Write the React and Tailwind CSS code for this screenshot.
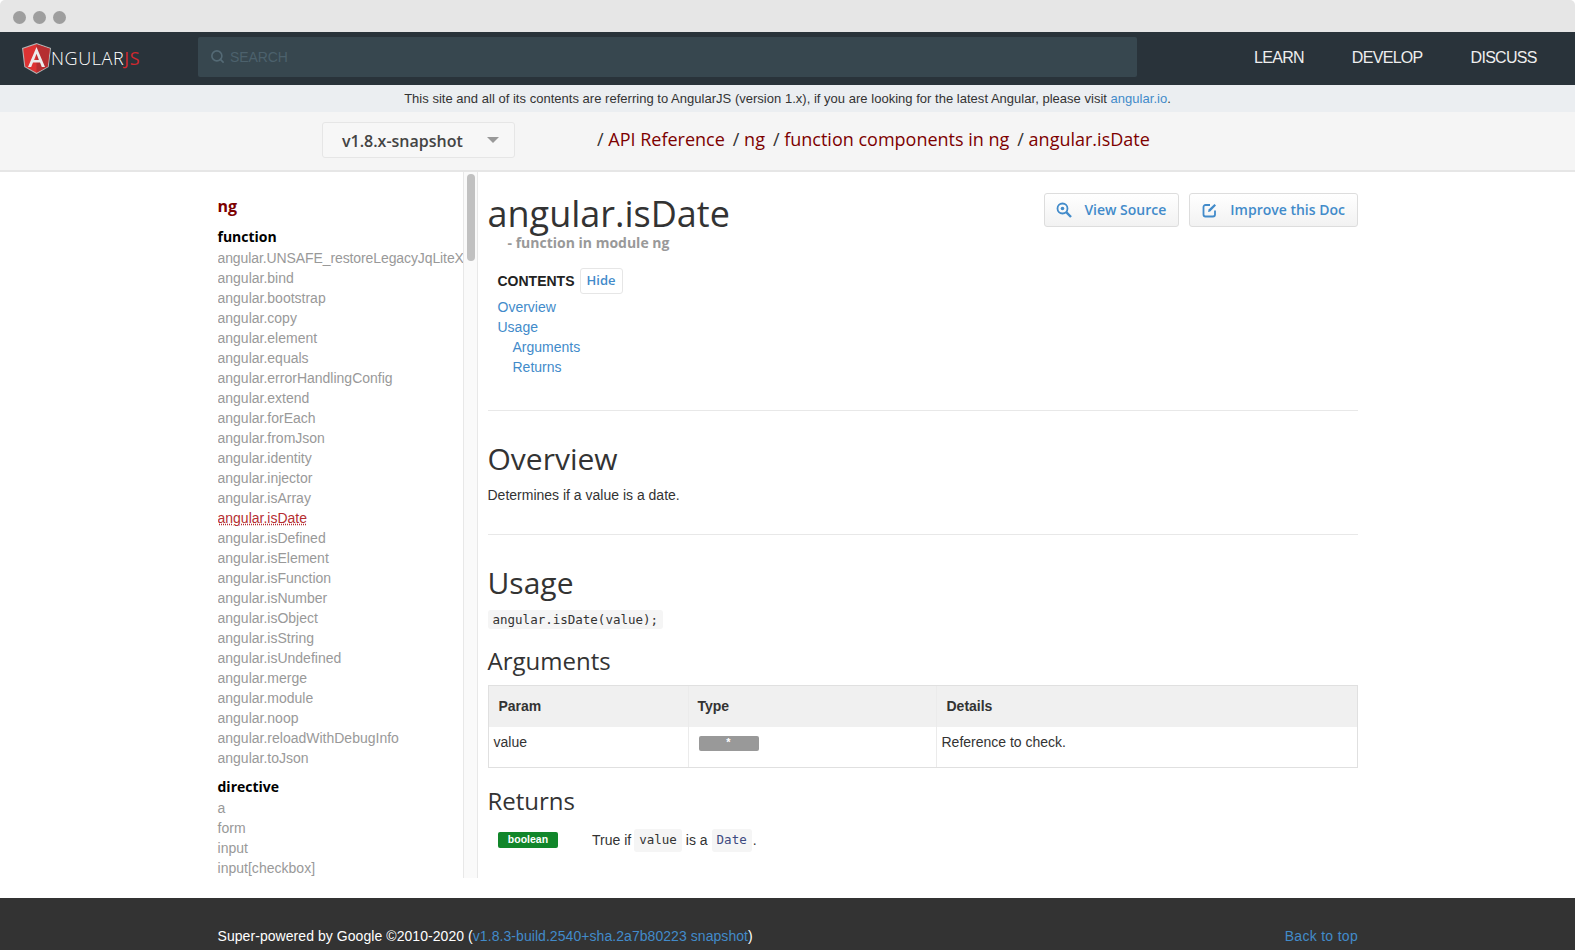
import React from "react";
import { Search } from "lucide-react";

const sans = "font-['Liberation_Sans',Arial,sans-serif]";
const open = "font-['Open_Sans',sans-serif]";
const mono = "font-['DejaVu_Sans_Mono',monospace]";

const fns = ["angular.UNSAFE_restoreLegacyJqLiteXHR","angular.bind","angular.bootstrap","angular.copy","angular.element","angular.equals","angular.errorHandlingConfig","angular.extend","angular.forEach","angular.fromJson","angular.identity","angular.injector","angular.isArray","angular.isDate","angular.isDefined","angular.isElement","angular.isFunction","angular.isNumber","angular.isObject","angular.isString","angular.isUndefined","angular.merge","angular.module","angular.noop","angular.reloadWithDebugInfo","angular.toJson"];
const dirs = ["a","form","input","input[checkbox]"];

function Logo() {
  return (
    <div className="flex items-center w-[198px] pl-[22px] shrink-0">
      <svg width="29" height="31" viewBox="0 0 29 31" className="shrink-0">
        <path d="M14.5 0 L0 5 L2.3 24 L14.5 31 L26.7 24 L29 5 Z" fill="#b3b3b3" />
        <path d="M14.5 1.2 L1.2 5.8 L3.3 23.4 L14.5 29.8 L25.7 23.4 L27.8 5.8 Z" fill="#dd3333" />
        <path d="M14.5 1.2 L27.8 5.8 L25.7 23.4 L14.5 29.8 Z" fill="#b52e31" />
        <path d="M14.5 4 L6 24 L9.2 24 L11 19.5 L18 19.5 L19.8 24 L23 24 Z M12.1 17 L14.5 10.8 L16.9 17 Z" fill="#ececec" fillRule="evenodd" />
      </svg>
      <span className={`${open} font-light text-[18px] leading-none text-white tracking-[0.6px] -mt-[1px]`}>NGULAR<span className="text-[#d0282e] font-normal">JS</span></span>
    </div>
  );
}

function Btn({ children }) {
  return (
    <a className={`h-[34px] flex items-center border border-[#dddddd] rounded-[3px] bg-gradient-to-b from-white to-[#f2f2f2] text-[#428bca] ${open} font-semibold text-[14px]`}>
      {children}
    </a>
  );
}

export default function App() {
  return (
    <div className={`h-[950px] w-[1575px] overflow-hidden flex flex-col bg-white ${sans}`}>
      <div className="h-[32px] bg-[#e6e6e6] rounded-t-[5px] flex items-center gap-[7px] pl-[13px] pt-[2px] shrink-0">
        <span className="w-[13px] h-[13px] rounded-full bg-[#9e9e9e]" />
        <span className="w-[13px] h-[13px] rounded-full bg-[#9e9e9e]" />
        <span className="w-[13px] h-[13px] rounded-full bg-[#9e9e9e]" />
      </div>

      <div className="h-[53px] bg-[#29333a] flex items-center shrink-0">
        <Logo />
        <div className="w-[939px] h-[40px] mb-[3px] bg-[#37474f] rounded-[2px] flex items-center pl-[12px] shrink-0">
          <Search size={15} strokeWidth={2.6} className="text-[#546a75] -mt-[2px]" />
          <span className="ml-[5px] mt-[1px] text-[14px] text-[#4c616c] tracking-[-0.1px]">SEARCH</span>
        </div>
        <div className="flex ml-[117px] mb-[1px] gap-[48px] text-[16px] text-[#eeeeee] tracking-[-0.7px]">
          <span>LEARN</span><span>DEVELOP</span><span>DISCUSS</span>
        </div>
      </div>

      <div className="h-[27px] bg-[#ebeef1] flex items-center justify-center text-[13px] tracking-[0.02px] text-[#333] shrink-0">
        <span>This site and all of its contents are referring to AngularJS (version 1.x), if you are looking for the latest Angular, please visit <span className="text-[#428bca]">angular.io</span>.</span>
      </div>

      <div className="h-[60px] bg-[#f5f5f5] border-b-2 border-[#e6e6e6] flex items-center shrink-0">
        <div className="ml-[322px] w-[193px] h-[36px] -mt-[2px] border border-[#e6e6e6] rounded-[3px] bg-[#f7f7f7] flex items-center pl-[19px] shrink-0">
          <span className={`${open} font-semibold text-[16px] text-[#444] mt-[2px]`}>v1.8.x-snapshot</span>
          <span className="ml-[24px] w-0 h-0 border-l-[6px] border-r-[6px] border-t-[6px] border-l-transparent border-r-transparent border-t-[#999]" />
        </div>
        <div className={`ml-[82px] ${open} text-[18px] text-[#333] -mt-[3px] flex gap-[8px]`}>
          <span>/ <span className="text-[#7d0000]">API Reference</span></span>
          <span>/ <span className="text-[#7d0000]">ng</span></span>
          <span>/ <span className="text-[#7d0000]">function components in ng</span></span>
          <span>/ <span className="text-[#7d0000]">angular.isDate</span></span>
        </div>
      </div>

      <div className="flex-1 min-h-0 flex">
        <div className="w-[463px] pl-[217.5px] shrink-0 overflow-hidden h-[706px]">
          <div className={`${open} font-bold text-[16px] leading-[22px] text-[#7d0000] pt-[23px]`}>ng</div>
          <div className={`${open} font-bold text-[14px] leading-[20px] text-black mt-[10px] mb-[1px]`}>function</div>
          {fns.map((f, i) => (
            <div key={f} className={`h-[20px] leading-[20px] whitespace-nowrap text-[14px] overflow-hidden ${i === 0 ? "tracking-[-0.1px]" : "tracking-[0px]"} ${f === "angular.isDate" ? "" : "text-[#999]"}`}>
              {f === "angular.isDate"
                ? <span className="text-[#b52e31] underline decoration-dotted">{f}</span>
                : f}
            </div>
          ))}
          <div className={`${open} font-bold text-[14px] leading-[20px] text-black mt-[9px] mb-[1px]`}>directive</div>
          {dirs.map((f) => (
            <div key={f} className="h-[20px] leading-[20px] text-[14px] tracking-[0.02px] text-[#999]">{f}</div>
          ))}
        </div>

        <div className="w-[15px] h-[706px] bg-[#fafafa] border-x border-[#e8e8e8] shrink-0 pt-[2px] flex justify-center">
          <div className="w-[8px] h-[87px] rounded-full bg-[#c1c1c1]" />
        </div>

        <div className="w-[870.5px] ml-[9.5px] shrink-0">
          <div className="flex justify-between items-start">
            <div>
              <h1 className={`${open} text-[36px] leading-[40px] text-[#333] mt-[22px]`}>angular.isDate</h1>
              <div className={`${open} font-bold text-[14px] leading-[20px] text-[#999] ml-[20px] -mt-[1px]`}>- function in module ng</div>
            </div>
            <div className="flex gap-[10px] mt-[21px]">
              <Btn>
                <svg width="16" height="16" viewBox="0 0 16 16" className="ml-[11px] mr-[12px] -mt-[1px]" fill="none" stroke="#428bca" strokeWidth="1.8"><circle cx="6.5" cy="6.5" r="5" /><circle cx="6.5" cy="6.5" r="1.8" fill="#428bca" stroke="none" /><path d="M10.2 10.2 L15 15" strokeWidth="2.4" /></svg>
                <span className="pr-[12px] -mt-[2px]">View Source</span>
              </Btn>
              <Btn>
                <svg width="16" height="16" viewBox="0 0 16 16" className="ml-[12px] mr-[12px] -mt-[1px]" fill="none" stroke="#428bca" strokeWidth="1.8"><path d="M8 3 H3.5 A2 2 0 0 0 1.5 5 V12.5 A2 2 0 0 0 3.5 14.5 H11 A2 2 0 0 0 13 12.5 V8.5" /><path d="M6 10 L6.6 7.6 L12.5 2 L14 3.6 L8.2 9.4 Z" fill="#428bca" stroke="none" /></svg>
                <span className="pr-[12px] -mt-[2px]">Improve this Doc</span>
              </Btn>
            </div>
          </div>

          <div className="ml-[10px] mt-[15px] flex items-center">
            <span className="font-bold text-[14px] text-[#222]">CONTENTS</span>
            <span className={`ml-[5px] h-[26px] w-[43px] border border-[#e6e6e6] rounded-[3px] flex items-center justify-center ${open} font-semibold text-[13px] text-[#428bca]`}>Hide</span>
          </div>
          <div className="ml-[10px] mt-[3px] text-[14px] leading-[20px] text-[#428bca] tracking-[0px]">
            <div>Overview</div>
            <div>Usage</div>
            <div className="ml-[15px]">Arguments</div>
            <div className="ml-[15px]">Returns</div>
          </div>
          <div className="border-t border-[#e8e8e8] mt-[33px]" />

          <h2 className={`${open} text-[30px] leading-[40px] text-[#333] mt-[28px]`}>Overview</h2>
          <p className="text-[14px] leading-[20px] text-[#333] mt-[6px]">Determines if a value is a date.</p>
          <div className="border-t border-[#e8e8e8] mt-[29px]" />

          <h2 className={`${open} text-[30px] leading-[40px] text-[#333] mt-[28px]`}>Usage</h2>
          <div className="mt-[4px]"><code className={`${mono} text-[12.5px] bg-[#f5f5f5] rounded-[3px] px-[5px] py-[2px] text-[#333]`}>angular.isDate(value);</code></div>

          <h3 className={`${open} text-[24px] leading-[30px] text-[#333] mt-[15px]`}>Arguments</h3>
          <div className="mt-[9px] border border-[#e0e0e0] grid grid-cols-[200px_248px_1fr] text-[14px] text-[#333]">
            <div className="h-[41px] bg-[#f0f0f0] font-bold flex items-center pl-[10px] border-r border-[#ebebeb]">Param</div>
            <div className="h-[41px] bg-[#f0f0f0] font-bold flex items-center pl-[9px] border-r border-[#ebebeb]">Type</div>
            <div className="h-[41px] bg-[#f0f0f0] font-bold flex items-center pl-[10px]">Details</div>
            <div className="h-[40px] pl-[5px] pt-[5px] border-r border-[#ebebeb]">value</div>
            <div className="h-[40px] pl-[10px] pt-[9px] border-r border-[#ebebeb]">
              <div className="w-[60px] h-[15px] bg-[#999] rounded-[2px] text-white font-bold text-[11px] leading-[13px] text-center">*</div>
            </div>
            <div className="h-[40px] pl-[5px] pt-[5px]">Reference to check.</div>
          </div>

          <h3 className={`${open} text-[24px] leading-[30px] text-[#333] mt-[18px]`}>Returns</h3>
          <div className="flex items-center mt-[13px] text-[14px] text-[#333]">
            <span className="ml-[10.5px] w-[60px] h-[16px] bg-[#11862a] rounded-[2px] text-white font-bold text-[10.5px] leading-[15px] text-center">boolean</span>
            <span className="ml-[34px]">True if</span>
            <code className={`${mono} text-[12.5px] bg-[#f5f5f5] rounded-[3px] px-[5px] py-[2px] ml-[3px]`}>value</code>
            <span className="ml-[4px]">is a</span>
            <code className={`${mono} text-[12.5px] bg-[#f5f5f5] rounded-[3px] px-[5px] py-[2px] ml-[4px] text-[#3d4a80]`}>Date</code>
            <span className="ml-[1px]">.</span>
          </div>
        </div>
      </div>

      <div className="h-[52px] bg-[#333333] shrink-0 flex justify-between pl-[217.5px] pr-[217px] pt-[28px] text-[14px] leading-[20px] text-white">
        <span className="tracking-[0.06px]">Super-powered by Google ©2010-2020 (<span className="text-[#428bca]">v1.8.3-build.2540+sha.2a7b80223 snapshot</span>)</span>
        <span className="text-[#428bca] tracking-[0.3px]">Back to top</span>
      </div>
    </div>
  );
}
